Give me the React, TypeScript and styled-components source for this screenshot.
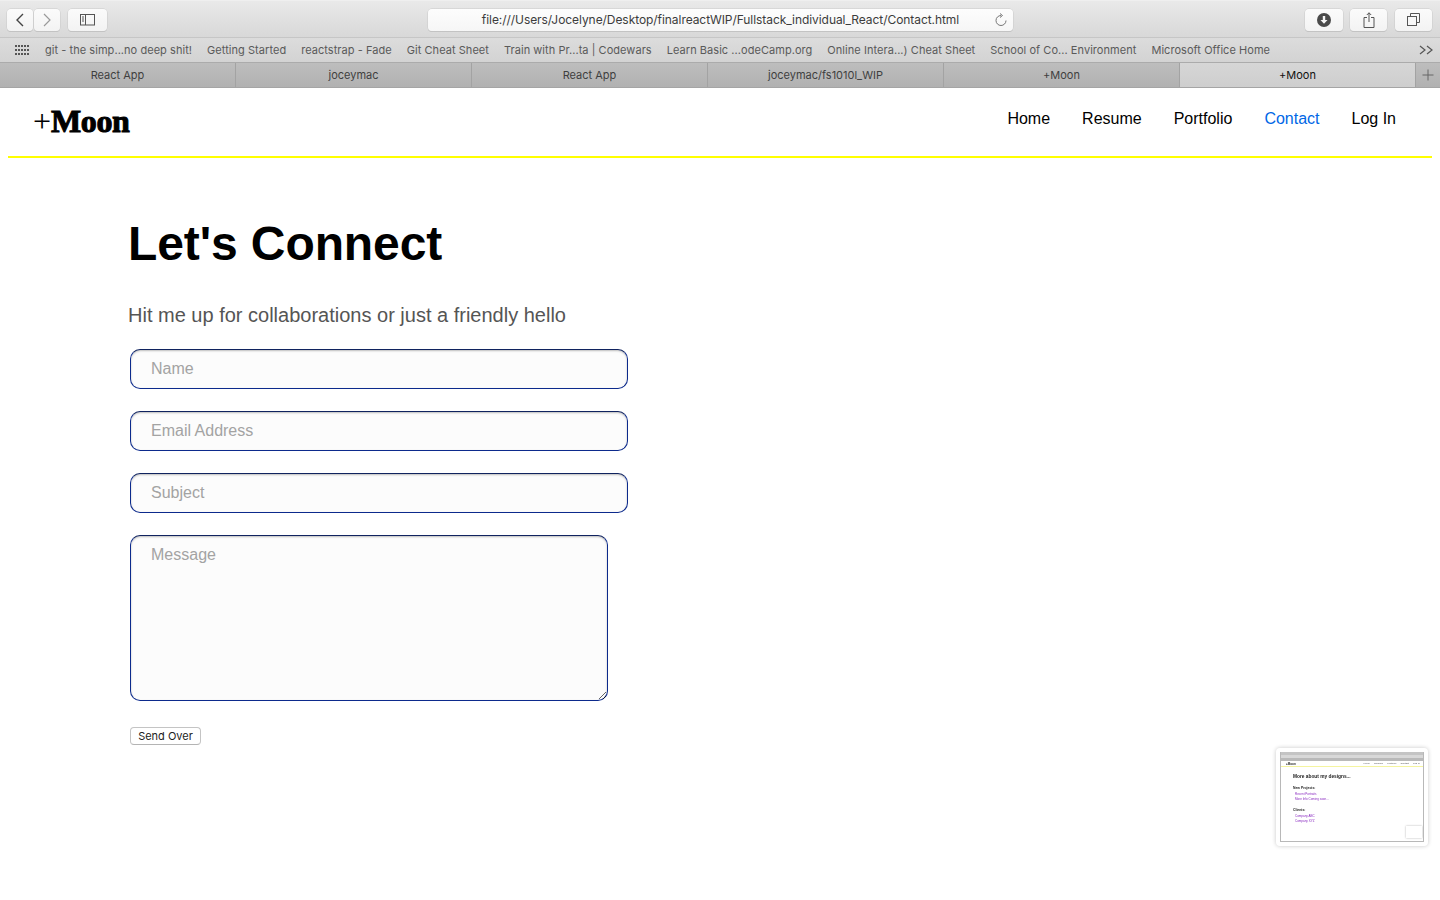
import React from "react";
import styled, { createGlobalStyle } from "styled-components";

const GlobalStyle = createGlobalStyle`
  html, body {
    margin: 0;
    padding: 0;
    background: #fff;
  }
  * { box-sizing: border-box; }
`;

const Screen = styled.div`
  position: relative;
  width: 1440px;
  height: 900px;
  overflow: hidden;
  font-family: "Liberation Sans", Arial, sans-serif;
`;

const Toolbar = styled.div`
  height: 38px;
  display: grid;
  grid-template-columns: 428px 585px 1fr;
  align-items: center;
  padding-top: 1px;
  background: linear-gradient(#e9e9e9, #d8d8d8);
  border-top: 1px solid #efefef;
  border-bottom: 1px solid #c6c6c6;
`;
const ToolGroup = styled.div`
  display: flex;
  align-items: center;
  padding-left: 7px;
`;
const RightGroup = styled.div`
  display: flex;
  justify-content: flex-end;
  gap: 7px;
  padding-right: 8px;
`;
const ToolButton = styled.div<{ $w: number; $ml?: number }>`
  width: ${(p) => p.$w}px;
  height: 22px;
  margin-left: ${(p) => p.$ml ?? 0}px;
  display: flex;
  align-items: center;
  justify-content: center;
  background: linear-gradient(#fbfbfb, #f3f3f3);
  border-radius: 4px;
  box-shadow: 0 0 0 0.5px #c9c9c9, 0 1px 0 #bdbdbd;
`;
const UrlBar = styled.div`
  position: relative;
  height: 22px;
  display: flex;
  align-items: center;
  justify-content: center;
  background: linear-gradient(#fdfdfd, #f6f6f6);
  border-radius: 4px;
  box-shadow: 0 0 0 0.5px #c9c9c9, 0 1px 0 #bdbdbd;
  font-family: Inter, "Liberation Sans", sans-serif;
  font-size: 12px;
  letter-spacing: -0.06px;
  color: #3c3c3c;
`;
const Reload = styled.div`
  position: absolute;
  right: 6px;
  top: 4px;
  display: flex;
`;

const Bookmarks = styled.div`
  height: 25px;
  position: relative;
  display: flex;
  align-items: center;
  padding-left: 15px;
  background: linear-gradient(#dcdcdc, #d3d3d3);
  border-bottom: 1px solid #ababab;
  font-family: Inter, "Liberation Sans", sans-serif;
  font-size: 11px;
  letter-spacing: 0.05px;
  color: #5a5a5a;
`;
const BookmarkList = styled.div`
  display: flex;
  margin-left: 15px;
  gap: 15px;
  white-space: nowrap;
`;
const More = styled.div`
  position: absolute;
  right: 7px;
  top: 7px;
  display: flex;
`;

const Tabs = styled.div`
  height: 25px;
  display: flex;
  border-bottom: 1px solid #a5a5a5;
  background: linear-gradient(#bdbdbd, #b1b1b1);
  font-family: Inter, "Liberation Sans", sans-serif;
  font-size: 11px;
`;
const Tab = styled.div<{ $active?: boolean }>`
  width: 236px;
  display: flex;
  align-items: center;
  justify-content: center;
  border-right: 1px solid #a3a3a3;
  color: ${(p) => (p.$active ? "#111" : "#3f3f3f")};
  background: ${(p) => (p.$active ? "linear-gradient(#d6d6d6, #cecece)" : "transparent")};
`;
const NewTab = styled.div`
  flex: 1;
  display: flex;
  align-items: center;
  justify-content: center;
`;

const Header = styled.header`
  height: 70px;
  margin: 0 8px;
  display: flex;
  justify-content: space-between;
  border-bottom: 2px solid #ffff00;
`;
const Logo = styled.div`
  margin: 14px 0 0 25px;
  font-family: "Liberation Serif", "Times New Roman", serif;
  font-size: 32px;
  line-height: 38px;
  color: #000;
  span {
    font-weight: 700;
    -webkit-text-stroke: 1px #000;
    letter-spacing: -0.4px;
  }
`;
const Nav = styled.nav`
  display: flex;
  gap: 32px;
  margin: 21px 36px 0 0;
  font-size: 16px;
  line-height: 19px;
`;
const NavLink = styled.a<{ $active?: boolean }>`
  color: ${(p) => (p.$active ? "#0067e6" : "#000")};
`;

const Main = styled.main`
  padding: 58px 0 0 128px;
`;
const Title = styled.h1`
  margin: 0;
  font-size: 48px;
  line-height: 56px;
  font-weight: 700;
  letter-spacing: -0.1px;
  color: #000;
`;
const Lead = styled.p`
  margin: 31px 0 21px;
  font-size: 20px;
  line-height: 25px;
  color: #555;
`;
const Form = styled.form`
  display: flex;
  flex-direction: column;
  align-items: flex-start;
  padding-left: 2px;
`;
const fieldCss = `
  display: block;
  border: 1px solid #0c2a8c;
  border-top-color: #10235f;
  border-radius: 10px;
  background: #fcfcfc;
  box-shadow: inset 0 1px 2px rgba(0, 0, 0, 0.25);
  padding: 0 20px;
  font-family: "Liberation Sans", Arial, sans-serif;
  font-size: 16px;
  color: #222;
  outline: none;
  &::placeholder {
    color: #a3a3a3;
    opacity: 1;
  }
`;
const Field = styled.input`
  ${fieldCss}
  width: 498px;
  height: 40px;
  margin-bottom: 22px;
`;
const MessageBox = styled.textarea`
  ${fieldCss}
  width: 478px;
  height: 166px;
  padding-top: 10px;
  line-height: 18px;
`;
const SendButton = styled.button`
  margin-top: 26px;
  width: 71px;
  height: 18px;
  padding: 0;
  background: #fff;
  border: 1px solid #c4c4c4;
  border-bottom-color: #b4b4b4;
  border-radius: 4px;
  font-family: Inter, "Liberation Sans", sans-serif;
  font-size: 11px;
  line-height: 15px;
  color: #222;
`;

// little screenshot preview bottom right, what Safari shows after a capture
const Preview = styled.div`
  position: absolute;
  left: 1276px;
  top: 748px;
  width: 152px;
  height: 98px;
  padding: 4px;
  background: #fff;
  border-radius: 4px;
  box-shadow: 0 0 4px rgba(0, 0, 0, 0.22);
`;
const Mini = styled.div`
  position: relative;
  height: 90px;
  border: 1px solid #b8b8b8;
  border-top: none;
  overflow: hidden;
  font-family: "Liberation Sans", Arial, sans-serif;
  filter: blur(0.4px);
`;
const MiniChrome = styled.div`
  height: 9px;
  background: linear-gradient(#c4c4c4 0 3px, #d8d8d8 3px 6px, #b9b9b9 6px);
`;
const MiniHead = styled.div`
  height: 6px;
  display: flex;
  align-items: center;
  justify-content: space-between;
  padding: 0 3px 0 5px;
  border-bottom: 0.5px solid #f4f4a0;
  font-size: 3px;
  font-weight: 700;
  color: #222;
`;
const MiniNav = styled.div`
  display: flex;
  gap: 4px;
  font-weight: 400;
  font-size: 2.5px;
  color: #555;
`;
const MiniBody = styled.div`
  padding: 7px 0 0 12px;
`;
const MiniTitle = styled.div`
  font-size: 4.8px;
  line-height: 6px;
  font-weight: 700;
  color: #222;
  margin-bottom: 6px;
`;
const MiniLabel = styled.div`
  font-size: 3.4px;
  line-height: 4px;
  font-weight: 700;
  color: #222;
  margin-bottom: 2px;
`;
const MiniLink = styled.div`
  font-size: 3px;
  line-height: 4px;
  color: #8a2bc0;
  padding-left: 2px;
  margin-bottom: 0.5px;
`;
const MiniGap = styled.div`
  height: 7px;
`;
const MiniThumb = styled.div`
  position: absolute;
  right: 1px;
  bottom: 3px;
  width: 16px;
  height: 12px;
  background: #fff;
  box-shadow: 0 0 2px rgba(0, 0, 0, 0.3);
`;

const bookmarks = [
  "git - the simp...no deep shit!",
  "Getting Started",
  "reactstrap - Fade",
  "Git Cheat Sheet",
  "Train with Pr...ta | Codewars",
  "Learn Basic ...odeCamp.org",
  "Online Intera...) Cheat Sheet",
  "School of Co... Environment",
  "Microsoft Office Home",
];

const tabs = ["React App", "joceymac", "React App", "joceymac/fs1010l_WIP", "+Moon", "+Moon"];
const navItems = ["Home", "Resume", "Portfolio", "Contact", "Log In"];

function App() {
  return (
    <Screen>
      <GlobalStyle />
      <Toolbar>
        <ToolGroup>
          <ToolButton $w={26}>
            <svg width="10" height="14" viewBox="0 0 10 14" fill="none" stroke="#444" strokeWidth="1.4">
              <path d="M8 1 2 7l6 6" />
            </svg>
          </ToolButton>
          <ToolButton $w={26} $ml={1}>
            <svg width="10" height="14" viewBox="0 0 10 14" fill="none" stroke="#9a9a9a" strokeWidth="1.2">
              <path d="m2 1 6 6-6 6" />
            </svg>
          </ToolButton>
          <ToolButton $w={39} $ml={8}>
            <svg width="16" height="12" viewBox="0 0 16 12" fill="none" stroke="#555">
              <rect x="0.5" y="0.5" width="14" height="10.5" />
              <path d="M5.5 0.5v10.5M2 3h2M2 5h2M2 7h2" />
            </svg>
          </ToolButton>
        </ToolGroup>
        <UrlBar>
          file:///Users/Jocelyne/Desktop/finalreactWIP/Fullstack_individual_React/Contact.html
          <Reload>
            <svg width="13" height="14" viewBox="0 0 13 14" fill="none" stroke="#777" strokeWidth="1">
              <path d="M7 2.5a5 5 0 1 0 5 5" />
              <path d="m6 0.5 2.5 2L6 4.5" />
            </svg>
          </Reload>
        </UrlBar>
        <RightGroup>
          <ToolButton $w={38}>
            <svg width="14" height="14" viewBox="0 0 14 14">
              <circle cx="7" cy="7" r="7" fill="#4a4a4a" />
              <path d="M5.8 3h2.4v4H10.500L7 10.800 3.500 7h2.300z" fill="#f7f7f7" />
            </svg>
          </ToolButton>
          <ToolButton $w={37}>
            <svg width="12" height="16" viewBox="0 0 12 16" fill="none" stroke="#555">
              <path d="M4 5.500H1v10h10v-10H8M6 10V0.800M3.800 3 6 0.800 8.200 3" />
            </svg>
          </ToolButton>
          <ToolButton $w={37} $ml={1}>
            <svg width="13" height="13" viewBox="0 0 13 13" fill="none" stroke="#555">
              <rect x="0.5" y="3.500" width="9" height="9" fill="#f7f7f7" />
              <path d="M3.500 3.500v-3h9v9h-3" />
            </svg>
          </ToolButton>
        </RightGroup>
      </Toolbar>
      <Bookmarks>
        <svg width="15" height="11" viewBox="0 0 15 11" fill="#555">
          {[0, 4, 8].map((y) =>
            [0, 3, 6, 9, 12].map((x) => <rect key={`${x}-${y}`} x={x} y={y} width="2" height="2" />)
          )}
        </svg>
        <BookmarkList>
          {bookmarks.map((b) => (
            <span key={b}>{b}</span>
          ))}
        </BookmarkList>
        <More>
          <svg width="14" height="10" viewBox="0 0 14 10" fill="none" stroke="#555" strokeWidth="1.2">
            <path d="m1 1 5 4-5 4M8 1l5 4-5 4" />
          </svg>
        </More>
      </Bookmarks>
      <Tabs>
        {tabs.map((t, i) => (
          <Tab key={i} $active={i === 5}>
            {t}
          </Tab>
        ))}
        <NewTab>
          <svg width="12" height="12" viewBox="0 0 12 12" stroke="#666">
            <path d="M6 0.500v11M0.500 6h11" />
          </svg>
        </NewTab>
      </Tabs>

      <Header>
        <Logo>
          +<span>Moon</span>
        </Logo>
        <Nav>
          {navItems.map((n) => (
            <NavLink key={n} $active={n === "Contact"}>
              {n}
            </NavLink>
          ))}
        </Nav>
      </Header>

      <Main>
        <Title>Let's Connect</Title>
        <Lead>Hit me up for collaborations or just a friendly hello</Lead>
        <Form>
          <Field placeholder="Name" />
          <Field placeholder="Email Address" />
          <Field placeholder="Subject" />
          <MessageBox placeholder="Message" />
          <SendButton type="button">Send Over</SendButton>
        </Form>
      </Main>

      <Preview>
        <Mini>
          <MiniChrome />
          <MiniHead>
            +Moon
            <MiniNav>
              <span>Home</span>
              <span>Resume</span>
              <span>Portfolio</span>
              <span>Contact</span>
              <span>Log In</span>
            </MiniNav>
          </MiniHead>
          <MiniBody>
            <MiniTitle>More about my designs...</MiniTitle>
            <MiniLabel>New Projects:</MiniLabel>
            <MiniLink>Recent Portraits</MiniLink>
            <MiniLink>More Info Coming soon...</MiniLink>
            <MiniGap />
            <MiniLabel>Clients:</MiniLabel>
            <MiniLink>Company ABC</MiniLink>
            <MiniLink>Company XYZ</MiniLink>
          </MiniBody>
          <MiniThumb />
        </Mini>
      </Preview>
    </Screen>
  );
}

export default App;
